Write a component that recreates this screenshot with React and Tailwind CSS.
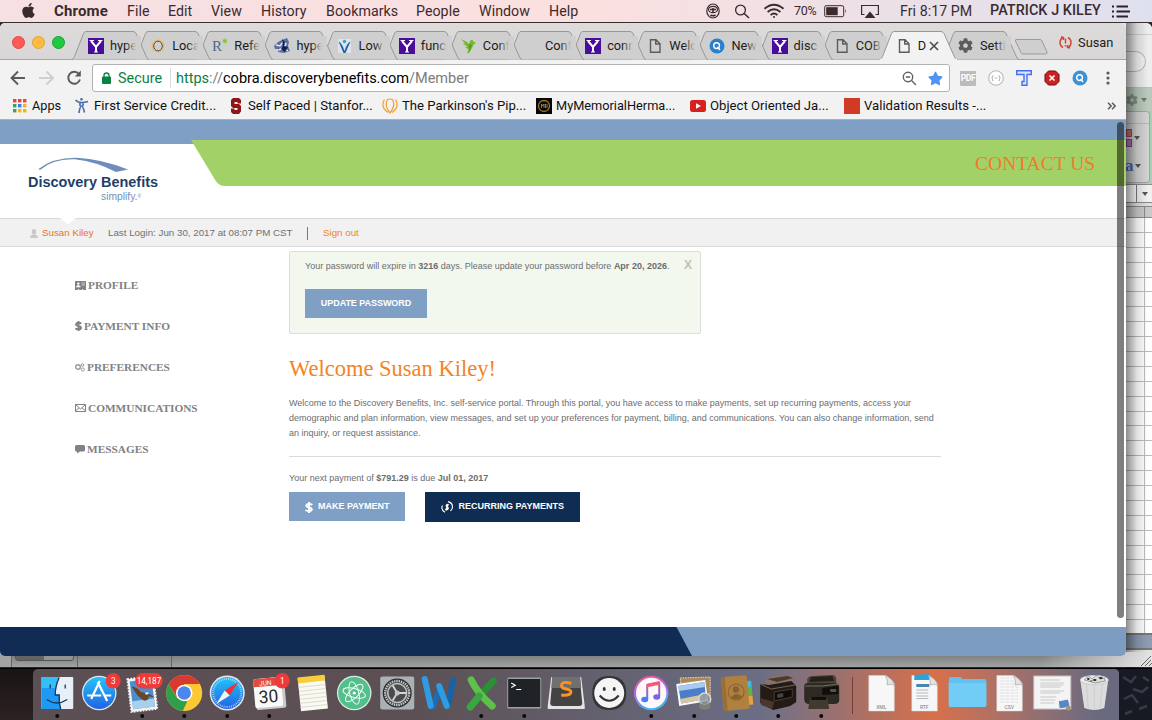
import React from "react";
import { FaApple, FaDollarSign, FaCog, FaLock, FaStar, FaCogs } from "react-icons/fa";

const MENUS = [
  ["File", "w-[41px]"],
  ["Edit", "w-[43px]"],
  ["View", "w-[50px]"],
  ["History", "w-[65px]"],
  ["Bookmarks", "w-[90px]"],
  ["People", "w-[63px]"],
  ["Window", "w-[70px]"],
  ["Help", "w-[40px]"],
];

function MenuBar() {
  return (
    <div className="relative flex h-[23px] w-full items-center border-b border-[#3a2f33] bg-linear-to-r from-[#f6e0e3] via-[#fbe0df] to-[#dfe0ee] text-[14.200px] leading-[22px] tracking-[0.050px] text-[#3a2a2e]">
      <div className="w-[54px] pl-[20px]">
        <FaApple size={17} className="-mt-[2px]" />
      </div>
      <div className="w-[73px] text-[15px] font-bold tracking-[0.15px]">Chrome</div>
      {MENUS.map(([t, w]) => (
        <div key={t} className={w + " font-[450] whitespace-nowrap"}>{t}</div>
      ))}
      <div className="ml-[115px] flex w-[447px] items-center">
        <svg className="w-[29px]" width="29" height="18" viewBox="0 0 29 18" fill="none" stroke="#3a2a2e">
          <ellipse cx="9" cy="9" rx="6.2" ry="7" strokeWidth="1.2" />
          <ellipse cx="9" cy="7.5" rx="4.5" ry="3.2" strokeWidth="1.2" />
          <path d="M9 6v4M6 7.500h6M6.500 13q2.500 1.500 5 0" strokeWidth="1.6" />
        </svg>
        <svg className="w-[29px]" width="29" height="18" viewBox="0 0 29 18" fill="none" stroke="#3a2a2e" strokeWidth="1.300">
          <circle cx="7.500" cy="8" r="4.900" />
          <path d="M11.200 11.500L16 16" strokeWidth="1.600" />
        </svg>
        <svg className="w-[32px]" width="32" height="18" viewBox="0 0 32 18" fill="none" stroke="#3a2a2e" strokeWidth="1.900">
          <path d="M2.500 6.800q9.500 -8 19 0M5.600 10q6.400 -5.400 12.800 0M8.600 13q3.400 -2.800 6.800 0" />
          <circle cx="12" cy="15" r="1" fill="#3a2a2e" stroke="none" />
        </svg>
        <span className="w-[28px] shrink-0 text-[12.500px] tracking-[-0.3px]">70%</span>
        <svg className="w-[38px]" width="38" height="18" viewBox="0 0 38 18">
          <rect x="2.700" y="3.700" width="19" height="11" rx="1.500" fill="none" stroke="#3a2a2e" />
          <rect x="4.200" y="5.200" width="11.500" height="8" fill="#3a2a2e" />
          <path d="M23.300 7v4.500q1.700 -2.200 0 -4.500" fill="#3a2a2e" />
        </svg>
        <svg className="w-[40px]" width="40" height="18" viewBox="0 0 40 18">
          <path d="M4.500 12.500H1.600V3.500H18.400V12.500H15.500" fill="none" stroke="#3a2a2e" strokeWidth="1.200" />
          <path d="M4.500 16L10 9.500L15.500 16Z" fill="#3a2a2e" />
        </svg>
        <span className="w-[90px] shrink-0 text-[14.200px] whitespace-nowrap">Fri 8:17 PM</span>
        <span className="w-[122px] shrink-0 text-[14.400px] font-medium whitespace-nowrap">PATRICK J KILEY</span>
        <svg className="shrink-0" width="20" height="18" viewBox="0 0 20 18" stroke="#2a2228" strokeWidth="2">
          <path d="M0 4.500h2M0 9.500h2M0 14.500h2M4.500 4.500H16M4.500 9.500H18M4.500 14.500H16" />
        </svg>
      </div>
    </div>
  );
}

function YIcon() {
  return (
    <svg width="16" height="16" viewBox="0 0 16 16">
      <rect width="16" height="16" fill="#4a0c9c" />
      <path d="M3 3l5 6 5-6M8 8.500V14" fill="none" stroke="#fff" strokeWidth="2" />
      <path d="M1.500 2.500h4.500M10 2.500h4.500M6 14h4" stroke="#fff" />
    </svg>
  );
}
function PageIcon() {
  return (
    <svg width="16" height="16" viewBox="0 0 16 16" fill="none" stroke="#5c5c5c" strokeWidth="1.400">
      <path d="M3.500 1.700H9L13 5.700V14.300H3.500ZM8.700 1.700V6H13" />
    </svg>
  );
}
function QIcon({ c = "#2a80cc" }) {
  return (
    <svg width="16" height="16" viewBox="0 0 16 16">
      <circle cx="8" cy="8" r="7.500" fill={c} />
      <circle cx="7.600" cy="7.600" r="2.900" fill="none" stroke="#fff" strokeWidth="1.400" />
      <path d="M8.500 9L11 12" stroke="#fff" strokeWidth="1.400" />
    </svg>
  );
}
const icons = {
  y: <YIcon />,
  o: (
    <svg width="16" height="16" viewBox="0 0 16 16">
      <circle cx="8" cy="8" r="5.800" fill="none" stroke="#f2b65a" strokeWidth="1.300" />
      <ellipse cx="8" cy="8" rx="4.300" ry="4.800" fill="none" stroke="#4e4b46" />
    </svg>
  ),
  r: (
    <svg className="overflow-visible" width="16" height="16" viewBox="0 0 16 16">
      <text x="0" y="13" fontFamily="Liberation Serif" fontSize="15" fill="#4c6a88">R</text>
      <path d="M12.800 0.500v5M10.600 1.700l4.400 2.600M15 1.700l-4.400 2.600" stroke="#86c232" strokeWidth="1.100" />
    </svg>
  ),
  knight: (
    <svg width="16" height="16" viewBox="0 0 16 16">
      <path d="M0 8L4 4L8 2L13 0L15 4L14 8L16 13L10 15L4 14L5 11L1 11Z" fill="#5c6da0" />
      <path d="M2 7l4 1 3-4 3 2-2 4 4 3M5 12l4-2" stroke="#dfe5f3" strokeWidth="1.500" fill="none" />
      <path d="M8 1l3 3-1 4 4 1-3 5-4-3 2-3z" fill="#15204a" />
    </svg>
  ),
  v: (
    <svg width="16" height="16" viewBox="0 0 16 16">
      <rect x="1" y="1" width="13" height="14" fill="#e0e4e8" />
      <circle cx="7.500" cy="3.500" r="1.700" fill="#29a8df" />
      <path d="M1.500 3.500Q5 4.500 7.500 13Q10 4.500 13.500 3.500Q11 9 8.500 15H6.500Q4 9 1.500 3.500Z" fill="#1d66ad" />
    </svg>
  ),
  bird: (
    <svg width="16" height="16" viewBox="0 0 16 16">
      <path d="M0 1L6 4L8 6L9 3L11 1.500L13 4L15 5L12.500 6.500L11 10L8 15L6 15.500L7.500 11L4 9.500L6.500 8.500L1.500 5.500L4 5.500Z" fill="#76b82a" />
      <path d="M8 6l3 1-3 7z" fill="#4f9a2c" />
    </svg>
  ),
  none: null,
  p: <PageIcon />,
  q: <QIcon />,
  g: <FaCog size={15} color="#5c5c5c" />,
};

const TABS = [
  ["y", "hype"], ["o", "Loca"], ["r", "Refe"], ["knight", "hype"], ["v", "Low"], ["y", "func"], ["bird", "Conf"],
  ["none", "Conf"], ["y", "conn"], ["p", "Welc"], ["q", "New"], ["y", "disc"], ["p", "COB"], ["p", "D", true], ["g", "Setti"],
];

function Tab({ icon, label, active, z }) {
  return (
    <div className="relative flex h-[29px] w-[62.15px] shrink-0 items-center" style={{ zIndex: z }}>
      <svg className="absolute top-0 left-[-13px]" width="80" height="29" viewBox="0 0 80 29">
        <path
          d="M0 28.500Q1.500 28 2.500 25.500L11.500 2.500Q12.300 0.500 14 0.500H61Q63 0.500 64 2.500L74.500 26Q75.500 28.500 77 28.500"
          fill={active ? "#f2f2f2" : "#cfcfcf"}
          stroke="#999797"
        />
        {active && <path d="M0 28.500H77" stroke="#f2f2f2" strokeWidth="1.500" />}
      </svg>
      <div className="relative ml-[3px] flex w-[16px] justify-center">{icons[icon]}</div>
      <div className="relative ml-[6px] w-[30px] text-[12.800px] whitespace-nowrap text-[#1b1b1b]">
        {label}
        {!active && <div className="absolute top-0 left-[15px] h-full w-[16px] bg-linear-to-r from-[#cfcfcf00] to-[#cfcfcf] to-70%" />}
      </div>
      {active && (
        <svg className="absolute top-[10px] left-[36.500px]" width="10" height="10" viewBox="0 0 10 10" stroke="#4f4f4f" strokeWidth="1.700">
          <path d="M1 1L9 9M9 1L1 9" />
        </svg>
      )}
    </div>
  );
}

function TabStrip() {
  return (
    <div className="flex h-[37px] items-end border-b border-[#a5a3a3] bg-linear-to-b from-[#dedbdb] to-[#d8d6d6]">
      <div className="mb-[10px] ml-[11.500px] flex w-[73.500px] gap-[7px] self-end">
        <div className="size-[13px] rounded-full border border-[#e2463f] bg-[#fc5b57]" />
        <div className="size-[13px] rounded-full border border-[#e1a233] bg-[#fdbc40]" />
        <div className="size-[13px] rounded-full border border-[#16a032] bg-[#22c840]" />
      </div>
      <div className="-mb-px flex">
        {TABS.map(([i, l, a], n) => (
          <Tab key={n} icon={i} label={l} active={a} z={a ? 40 : 30 - n} />
        ))}
      </div>
      <svg className="mb-[3px] ml-[-3px] shrink-0" width="36" height="18" viewBox="0 0 36 18">
        <path d="M2 1.500H26Q27.500 1.500 28 3L33 14Q33.500 16 31.500 16H9Q7.500 16 7 14.500L1.500 3Q1 1.500 2 1.500Z" fill="#cfcfcf" stroke="#9b9999" />
      </svg>
      <div className="mb-[7px] ml-[9px] flex items-center gap-[6px] text-[12.800px] whitespace-nowrap text-[#1b1b1b]">
        <svg width="13" height="13" viewBox="0 0 13 13" fill="none" stroke="#d64937" strokeWidth="1.500">
          <path d="M4 1.500Q1 3 1 6.500T4 11.500M9 1.500Q12 3 12 6.500T9 11.500M2 0.800L4.500 1.500V4M11 12L8.500 11.500V9" />
          <path d="M6.500 2.500V7.500M6.500 9V10.500" />
        </svg>
        Susan
      </div>
    </div>
  );
}

function Toolbar() {
  return (
    <div className="flex h-[35px] items-center pt-px">
      <svg className="ml-[10px]" width="82" height="18" viewBox="0 0 82 18" fill="none" strokeWidth="1.900">
        <path d="M15 9H2M8 2.500L1.600 9L8 15.500" stroke="#5a5a5a" />
        <path d="M29 9H42M36.500 2.500L43 9L36.500 15.500" stroke="#cfcfcf" />
        <path d="M69 5A6 6 0 1 0 70 10.500" stroke="#5a5a5a" />
        <path d="M70.800 1.500V7.500H64.800Z" fill="#5a5a5a" />
      </svg>
      <div className="flex h-[28px] w-[858px] items-center rounded-[3px] border border-[#b4b3b3] bg-white text-[14.500px] whitespace-nowrap">
        <svg className="ml-[8px]" width="11" height="12" viewBox="0 0 11 12">
          <rect x="1" y="4.500" width="9" height="7.500" rx="1" fill="#0b8043" />
          <path d="M3 5V3.300Q3 1 5.500 1T8 3.300V5" fill="none" stroke="#0b8043" strokeWidth="1.300" />
        </svg>
        <span className="mt-px ml-[6px] w-[52px] text-[14.400px] text-[#0b8043]">Secure</span>
        <span className="h-[20px] w-px bg-[#dcdcdc]" />
        <span className="mt-px ml-[5px] text-[#7c7c7c]">
          <span className="text-[#0b8043]">https</span>://<span className="text-black">cobra.discoverybenefits.com</span>/Member
        </span>
        <svg className="ml-auto" width="15" height="15" viewBox="0 0 15 15" fill="none" stroke="#606060" strokeWidth="1.400">
          <circle cx="6" cy="6" r="4.700" />
          <path d="M9.500 9.500L14 14M3.800 6h4.400" />
        </svg>
        <FaStar size={15} color="#4f93f3" className="mr-[6px] ml-[11px]" />
      </div>
      <div className="ml-[10px] flex h-[15px] w-[16px] items-center justify-center rounded-[1px] bg-[#bcbcbc] text-[8.500px] font-bold tracking-[-0.4px] text-white">PDF</div>
      <svg className="ml-[12px]" width="16" height="16" viewBox="0 0 16 16" fill="none" stroke="#b9b9b9" strokeWidth="1.100">
        <circle cx="8" cy="8" r="7.300" fill="#fff" />
        <path d="M5.500 5.500Q4.500 5.500 4.500 6.500T3.500 8Q4.500 8 4.500 9.500T5.500 10.500M10.500 5.500Q11.500 5.500 11.500 6.500T12.500 8Q11.500 8 11.500 9.500T10.500 10.500M6.500 8H9.500" />
      </svg>
      <svg className="ml-[12px]" width="16" height="16" viewBox="0 0 16 16" fill="none" stroke="#4a6fee" strokeWidth="1.400">
        <path d="M0.700 0.700H15.300V4.500H11V15.300H6V11.500H8V4.500H0.700Z" fill="#d9e2ff" />
      </svg>
      <svg className="ml-[12px]" width="16" height="16" viewBox="0 0 16 16">
        <path d="M4.500 1H11.500L15 4.500V11.500L11.500 15H4.500L1 11.500V4.500Z" fill="#cf1f1f" stroke="#641212" />
        <path d="M5.500 5.500L10.500 10.500M10.500 5.500L5.500 10.500" stroke="#fff" strokeWidth="1.600" />
      </svg>
      <div className="ml-[12px]"><QIcon c="#3c92d6" /></div>
      <svg className="ml-[18px]" width="4" height="16" viewBox="0 0 4 16" fill="#5a5a5a">
        <circle cx="2" cy="3" r="1.600" /><circle cx="2" cy="8" r="1.600" /><circle cx="2" cy="13" r="1.600" />
      </svg>
    </div>
  );
}

function Bookmark({ icon, children, className }) {
  return (
    <div className={"flex shrink-0 items-center whitespace-nowrap " + className}>
      <div className="mr-[4.500px] flex w-[16px] shrink-0 justify-center">{icon}</div>
      {children}
    </div>
  );
}

const APP_COLORS = ["#e8453c", "#e8453c", "#e8453c", "#34a853", "#3b7ded", "#f2b31c", "#34a853", "#f2b31c", "#f2b31c"];

function Bookmarks() {
  return (
    <div className="flex h-[25px] items-center border-b border-[#b2b1b1] pb-[2px] pl-[11.500px] text-[13.150px] text-[#111]">
      <Bookmark
        className="w-[62px] text-[12.700px]"
        icon={
          <svg width="14" height="14" viewBox="0 0 14 14">
            {APP_COLORS.map((c, i) => <rect key={i} x={(i % 3) * 5} y={Math.floor(i / 3) * 5} width="3.400" height="3.400" fill={c} />)}
          </svg>
        }
      >Apps</Bookmark>
      <Bookmark
        className="w-[154px] tracking-[0.08px]"
        icon={
          <svg width="14" height="17" viewBox="0 0 14 17" fill="none" stroke="#4a6eb0" strokeWidth="1.700">
            <circle cx="6.500" cy="2.200" r="1.300" fill="#4a6eb0" stroke="none" />
            <path d="M0.500 3Q3 5.500 6.500 5.500T13 4.500M5 5V9M8 5V9M4 16Q5 9 6.500 9T9.500 15.500" />
          </svg>
        }
      >First Service Credit...</Bookmark>
      <Bookmark
        className="w-[154px]"
        icon={
          <svg width="12" height="16" viewBox="0 0 12 16">
            <path d="M3 0H9L11 2V5.500H7.500V4H4.500V6H9L11 8V13.500L9 16H3L1 14V10.500H4.500V12H7.500V10H3L1 8V2Z" fill="#8f1518" />
          </svg>
        }
      >Self Paced | Stanfor...</Bookmark>
      <Bookmark
        className="w-[154px]"
        icon={
          <svg width="16" height="16" viewBox="0 0 16 16" fill="none" stroke="#f0a030" strokeWidth="1.200">
            <path d="M8 15Q2 8 5.500 1.500Q8 0.500 10.500 1.500Q14 8 8 15ZM6 14.500Q-2 9 2.500 1.500M10 14.500Q18 9 13.500 1.500" />
          </svg>
        }
      >The Parkinson's Pip...</Bookmark>
      <Bookmark
        className="w-[154px] text-[12.750px]"
        icon={
          <svg width="16" height="16" viewBox="0 0 16 16">
            <rect width="16" height="16" fill="#050505" />
            <circle cx="8" cy="8" r="5.500" fill="none" stroke="#a37722" strokeWidth="1.300" />
            <path d="M5.500 10V6L7 8L8 6V10M9.500 6v4M11 6v4" stroke="#8a7a58" fill="none" />
          </svg>
        }
      >MyMemorialHerma...</Bookmark>
      <Bookmark
        className="w-[154px]"
        icon={
          <svg width="16" height="12" viewBox="0 0 16 12">
            <rect width="16" height="12" rx="2.500" fill="#d8201f" />
            <path d="M6 3.200V8.800L11 6Z" fill="#fff" />
          </svg>
        }
      >Object Oriented Ja...</Bookmark>
      <Bookmark className="w-[154px]" icon={<div className="size-[16px] bg-[#d23b23]" />}>Validation Results -...</Bookmark>
      <svg className="ml-[109px]" width="10" height="8" viewBox="0 0 10 8" fill="none" stroke="#5a5a5a" strokeWidth="1.500">
        <path d="M1 0.800L4.200 4L1 7.200M5 0.800L8.200 4L5 7.200" />
      </svg>
    </div>
  );
}

const NAV = [
  ["PROFILE", (
    <svg width="11" height="9" viewBox="0 0 11 9">
      <path d="M0 0H11V9H8.500L7.500 8L6.500 9H4.500L3.500 8L2.500 9H0Z" fill="#808285" />
      <circle cx="3.300" cy="2.600" r="1.200" fill="#fff" /><path d="M1.200 6Q3.300 2.500 5.400 6ZM6.500 2H10M6.500 4H10" fill="#fff" stroke="#fff" strokeWidth="0.600" />
    </svg>
  )],
  ["PAYMENT INFO", <svg width="7" height="10" viewBox="0 0 7 10" fill="none" stroke="#808285" strokeWidth="1.900"><path d="M6.300 2.800Q5.500 1.700 3.500 1.700T1 3.200Q1 4.500 3.500 5T6 7Q6 8.400 3.500 8.400T0.500 7.200M3.500 0V10" /></svg>],
  ["PREFERENCES", (
    <svg width="10" height="9" viewBox="0 0 10 9" fill="none" stroke="#97999c"><circle cx="3" cy="4" r="2.300" strokeWidth="1.400" /><circle cx="7.500" cy="2" r="1.300" /><circle cx="7.800" cy="6.500" r="1.600" /></svg>
  )],
  ["COMMUNICATIONS", (
    <svg width="11" height="8" viewBox="0 0 11 8" fill="none" stroke="#808285">
      <path d="M0.500 0.500H10.500V7.500H0.500ZM0.500 0.500L5.500 5L10.500 0.500M0.500 7L4 3.800M10.500 7L7 3.800" />
    </svg>
  )],
  ["MESSAGES", (
    <svg width="10" height="9" viewBox="0 0 10 9"><path d="M1.500 0H8.500Q10 0 10 1.500V5Q10 6.500 8.500 6.500H5L2 8.500V6.500H1.500Q0 6.500 0 5V1.500Q0 0 1.500 0Z" fill="#808285" /></svg>
  )],
];

function SiteHeader() {
  return (
    <header className="relative h-[98px] bg-white">
      <div className="h-[24px] bg-[#7f9fc5]" />
      <svg className="absolute top-[20px] left-0" width="1126" height="46" viewBox="0 0 1126 46">
        <path d="M191 0H1126V46H225Q219 46 215.500 40.500Z" fill="#a2d167" />
      </svg>
      <div className="absolute top-[37px] left-[28px] w-[132px] font-['Liberation_Sans',Arial,sans-serif]">
        <svg width="105" height="15" viewBox="0 0 105 15" className="ml-[9px]">
          <path d="M1.500 12Q16 0.500 40 0.800Q64 2 91 12.500L79 15Q60 5 38 2.300Q16 1.500 3 13Z" fill="#6e8cbc" />
        </svg>
        <div className="text-[14.450px] leading-[20px] font-bold whitespace-nowrap text-[#1e3f68]">Discovery Benefits</div>
        <div className="-mt-[2px] ml-[73px] text-[10.300px] leading-[14px] whitespace-nowrap text-[#7390bd]">simplify.<sup className="text-[5px]">®</sup></div>
      </div>
      <div className="absolute top-[32px] left-[975px] font-['Liberation_Serif',serif] text-[19.550px] leading-[24px] whitespace-nowrap text-[#f5792a]">CONTACT US</div>
    </header>
  );
}

function UserBar() {
  return (
    <div className="relative flex h-[29px] items-center border-t border-b border-t-[#d9d9d9] border-b-[#d9d9d9] bg-[#f1f1f1] pt-[2px] font-['Liberation_Sans',Arial,sans-serif] text-[9.770px] whitespace-nowrap text-[#6f7073]">
      <svg className="absolute -top-px left-[60px]" width="16" height="7" viewBox="0 0 16 7"><path d="M0 0H16L8 6.500Z" fill="#fff" /></svg>
      <svg className="ml-[30px]" width="8" height="9" viewBox="0 0 8 9" fill="#c9c9c9"><ellipse cx="4" cy="2.800" rx="2.200" ry="2.700" /><path d="M0.300 9V7L3 5.500H5L7.700 7V9Z" /></svg>
      <span className="ml-[4px] w-[66px] text-[#f36f21]">Susan Kiley</span>
      <span className="w-[199px]">Last Login: Jun 30, 2017 at 08:07 PM CST</span>
      <span className="h-[13px] w-px bg-[#77787b]" />
      <span className="ml-[15px] text-[#f58220]">Sign out</span>
    </div>
  );
}

function SiteBody() {
  return (
    <div className="flex h-[380px] bg-white font-['Liberation_Sans',Arial,sans-serif] text-[9px] text-[#6c6d70]">
      <nav className="w-[289px] pt-[17.500px] pl-[75px] font-['Liberation_Serif',serif] text-[11.300px] font-bold text-[#808285]">
        {NAV.map(([t, icon]) => (
          <div key={t} className="flex h-[41px] items-center gap-[2px] whitespace-nowrap">{icon}<span>{t}</span></div>
        ))}
      </nav>
      <main className="w-[652px] pt-[4px]">
        <div className="relative h-[83px] w-[412px] rounded-[2px] border border-[#dbdfd8] bg-[#f3f8ee] pt-[7px] pl-[15px]">
          <div className="leading-[14px] whitespace-nowrap">
            Your password will expire in <b>3216</b> days. Please update your password before <b>Apr 20, 2026</b>.
          </div>
          <div className="absolute top-[4px] right-[8px] text-[12px] leading-[18px] font-bold text-[#bcc3bb]">X</div>
          <button className="mt-[16px] block h-[29px] w-[122px] bg-[#7f9fc5] text-center font-bold tracking-[-0.05px] whitespace-nowrap text-white">UPDATE PASSWORD</button>
        </div>
        <h1 className="mt-[21px] font-['Liberation_Serif',serif] text-[22.500px] leading-[28px] text-[#f28423]">Welcome Susan Kiley!</h1>
        <p className="mt-[13px] leading-[15px] whitespace-nowrap">
          Welcome to the Discovery Benefits, Inc. self-service portal. Through this portal, you have access to make payments, set up recurring payments, access your
          <br />
          demographic and plan information, view messages, and set up your preferences for payment, billing, and communications. You can also change information, send
          <br />
          an inquiry, or request assistance.
        </p>
        <div className="mt-[15px] h-px bg-[#dbdbdb]" />
        <p className="mt-[14px] leading-[15px]">
          Your next payment of <b>$791.29</b> is due <b>Jul 01, 2017</b>
        </p>
        <div className="mt-[6px] flex items-start gap-[20px] font-bold whitespace-nowrap text-white">
          <button className="flex h-[29px] w-[116px] items-center bg-[#7f9fc5] pt-px pl-[16px]">
            <svg width="8" height="11" viewBox="0 0 8 11" fill="none" stroke="#fff" strokeWidth="2" className="mr-[5px]"><path d="M7.200 3Q6.300 2 4 2T1.300 3.600Q1.300 5 4 5.500T6.800 7.600Q6.800 9 4 9T0.600 8M4 0V11" /></svg>
            MAKE PAYMENT
          </button>
          <button className="flex h-[30px] w-[155px] items-center bg-[#0f2c53] pl-[16px]">
            <svg width="12" height="12" viewBox="0 0 12 12" className="mr-[5.500px]" fill="none" stroke="#fff">
              <path d="M1.500 4.500Q-0.500 8.500 4 11.300M7 0.600Q12.500 2 11.200 7.500L9.500 10" strokeWidth="1.100" />
              <path d="M7.800 4.200Q6.800 3.400 5.800 3.900Q4.600 4.700 6 5.900Q7.600 6.700 6.800 8Q5.800 8.900 4.300 8M6.600 2.900L5.300 9.700" strokeWidth="1.500" />
            </svg>
            RECURRING PAYMENTS
          </button>
        </div>
      </main>
    </div>
  );
}

function ChromeWindow() {
  return (
    <div className="absolute top-[23px] left-0 h-[633px] w-[1126px] overflow-hidden rounded-[5px] bg-[#f2f2f2]">
      <TabStrip />
      <Toolbar />
      <Bookmarks />
      <div className="relative">
        <SiteHeader />
        <UserBar />
        <SiteBody />
        <svg className="block" width="1126" height="29" viewBox="0 0 1126 29">
          <path d="M0 0H1126V29H0Z" fill="#7c9cc2" />
          <path d="M0 0H676.500L692 29H0Z" fill="#102c54" />
        </svg>
        <div className="absolute top-[2px] right-[2px] h-[496px] w-[7px] rounded-full bg-black/50" />
      </div>
    </div>
  );
}

function Arrow({ className = "" }) {
  return <svg className={className} width="6" height="4" viewBox="0 0 6 4"><path d="M0 0H6L3 4Z" fill="#555" /></svg>;
}

const GRID_ROWS = Array.from({ length: 28 });

function SpreadsheetWindow() {
  return (
    <>
      <div className="absolute top-[23px] left-[1120px] flex h-[633px] w-[32px] flex-col overflow-hidden rounded-tr-[6px] bg-[#eaeaea] pl-[6px]">
        <div className="h-[12px] border-b border-[#cfcfcf] bg-[#ededed]" />
        <div className="flex h-[53px] items-center border-b border-[#bdbdbd] bg-[#ededed]">
          <div className="h-[21px] w-[20px] rounded-r-full border border-l-0 border-[#bababa] bg-[#f1f1f1]" />
        </div>
        <div className="flex h-[23px] items-center gap-[3px] bg-[#b9c9bc]">
          <FaCog size={12} color="#85918a" /><Arrow className="opacity-70" />
        </div>
        <div className="h-[73px] bg-[#a8d0b3]">
          <div className="h-[72px] w-[24px] rounded-r-[4px] border border-l-0 border-[#a4a4a4] bg-[#d2d2d2]">
            <div className="h-[12px] border-b border-[#b9b9b9]" />
            <div className="mt-[5px] flex items-center gap-[2px]">
              <div className="flex flex-col gap-[2px]">
                <div className="h-[8px] w-[6px] border border-[#a14c4c] bg-[#cf6f72]" />
                <div className="h-[8px] w-[6px] border border-[#84449a] bg-[#b572c8]" />
              </div>
              <Arrow />
            </div>
            <div className="mt-[9px] -ml-px flex items-center gap-px font-['Liberation_Serif',serif] text-[17px] leading-[20px] font-bold text-[#4a66b8]">a<Arrow /></div>
          </div>
        </div>
        <div className="flex h-[19px] border-t border-b border-[#8a8a8a] bg-white">
          <div className="w-[11px] border-r border-[#777]" />
          <div className="flex flex-1 items-center justify-center bg-[#f0f0f0]"><Arrow /></div>
        </div>
        <div className="h-[3px] bg-[#ddd]" />
        <div className="flex h-[12px] border-t border-b border-[#8a8a8a] bg-[#c9c9c9]"><div className="w-[19px] border-r border-[#8a8a8a]" /></div>
        <div className="h-[415px] shrink-0 overflow-hidden bg-white">
          {GRID_ROWS.map((_, i) => (
            <div key={i} className="flex h-[14.900px] border-b border-[#bcbcbc]"><div className="w-[19px] border-r border-[#bcbcbc]" /></div>
          ))}
        </div>
        <div className="h-[17px] shrink-0 border-t-2 border-b-2 border-[#777] bg-[#8c9cb2]" />
        <div className="flex-1 bg-[#e2e2e2]" />
      </div>
      <div className="absolute top-[23px] left-[1126px] h-[645px] w-[22px] bg-linear-to-r from-black/45 via-black/12 to-transparent" />
      <div className="absolute top-[652px] left-0 flex h-[15px] w-full justify-end bg-linear-to-b from-[#757575] to-[#a1a3a2]">
        <div className="absolute top-0 left-0 h-full w-[12px] border-r border-[#666] bg-[#a2a2a2]" />
        <div className="absolute top-0 left-[15px] h-[9px] w-[59px] rounded-b-[3px] border border-[#555] bg-linear-to-r from-[#636363] from-50% to-[#929292] to-50%" />
        <div className="absolute top-0 left-[77px] h-full w-[95px] border-r border-l border-[#666]" />
        <div className="h-full w-[110px] bg-linear-to-r from-transparent to-[#e4e4e4]" />
        <svg className="absolute right-0 bottom-0" width="12" height="12" viewBox="0 0 12 12" stroke="#666"><path d="M1 11L11 1M5 11L11 5M9 11L12 8" /></svg>
      </div>
    </>
  );
}

const doc = (label, extra) => (
  <>
    <path d="M8.500 7.500H26L34 16V43H8.500Z" fill="#f7f7f7" stroke="#d9d9d9" strokeWidth="0.500" />
    {extra}
    <path d="M25 7.500Q28 12 27 17Q31 15 34.500 17.500Q33 11 25 7.500Z" fill="#e4e4e4" stroke="#a2a2a2" strokeWidth="0.700" />
    <text x="21" y="41" textAnchor="middle" fontSize="5" fill="#777">{label}</text>
  </>
);

const badge = (x, w, t) => (
  <>
    <rect x={x} y="5" width={w} height="15.500" rx="7.700" fill="#ef3a3a" />
    <text x={x + w / 2} y="15.600" textAnchor="middle" fontSize="8.200" fill="#fff">{t}</text>
  </>
);

const DOCK = {
  finder: [true, <>
    <rect x="5" y="9" width="32" height="32" rx="1" fill="#e8f0f7" />
    <path d="M5 9H23Q19 18 19 27H23Q22.500 35 24.500 41H5Z" fill="#1e9af4" />
    <path d="M5 9H23Q19.500 15 19 20H5Z" fill="#35bff8" />
    <path d="M14 16.500v4M29 16.500v4M10.500 31.500Q20.500 38.500 31 31.500M23 9.500Q19 18 19 27H23Q22.500 35 24.500 41" fill="none" stroke="#15385e" strokeWidth="1.300" />
  </>],
  store: [false, <>
    <circle cx="21" cy="25" r="17.300" fill="#d8e8f4" /><circle cx="21" cy="25" r="16" fill="url(#blue)" />
    <path d="M21.500 13L13 31M19.500 14L29 33M9 27.500H23M27 27.500H33" fill="none" stroke="#fff" strokeWidth="2.200" />
    {badge(27.500, 15, "3")}
  </>],
  mail: [true, <>
    <g transform="rotate(-7 21 25)">
      <rect x="8" y="9.500" width="26" height="33" fill="#f4f4f4" stroke="#f4f4f4" strokeDasharray="1.700 1.300" strokeWidth="2" />
      <rect x="10" y="12" width="22" height="28" fill="#4b8fd0" /><rect x="10" y="32" width="22" height="8" fill="#a9d0ea" />
      <path d="M11 17Q17 19 20 24Q27 25 33 31L27 29Q27 33 22 33L19 30L16 27Z" fill="#6c4528" /><path d="M24 26l3 0" stroke="#fff" strokeWidth="2" />
    </g>
    {badge(14, 27.500, "14,187")}
  </>],
  chrome: [true, <>
    <circle cx="21" cy="25" r="18" fill="#fcc934" />
    <path d="M5.400 16A18 18 0 0 1 36.600 16H21L13.500 29Z" fill="#d93a30" />
    <path d="M5.400 16L13.500 29.500L24 33.500L19.500 43A18 18 0 0 1 5.400 16Z" fill="#2f9f4b" />
    <circle cx="21" cy="25" r="8.300" fill="#fff" /><circle cx="21" cy="25" r="6.700" fill="#4a86ee" />
  </>],
  safari: [true, <>
    <circle cx="21" cy="25" r="17.500" fill="#e4e7ea" /><circle cx="21" cy="25" r="16" fill="url(#blue)" />
    <circle cx="21" cy="25" r="14" fill="none" stroke="#bfe3fb" strokeWidth="2" strokeDasharray=".7 1.200" />
    <path d="M32 14L23.500 27.500L18.500 22.500Z" fill="#ee3333" /><path d="M10 36L18.500 22.500L23.500 27.500Z" fill="#f3f3f3" />
  </>],
  calendar: [true, <>
    <g transform="rotate(-5 21 25)">
      <rect x="7" y="10" width="30" height="31" rx="2" fill="#c9c9c9" /><rect x="6" y="10" width="28" height="29" rx="2" fill="#fafafa" />
      <path d="M6 18V12Q6 10 8 10H32Q34 10 34 12V18Z" fill="#e2493f" />
      <text x="18" y="17" textAnchor="middle" fontSize="6.500" fill="#fff">JUN</text>
      <text x="20" y="34.500" textAnchor="middle" fontSize="17.500" fill="#282828">30</text>
    </g>
    {badge(26.500, 15, "1")}
  </>],
  notes: [false, <g transform="rotate(-6 21 25)">
    <rect x="8" y="9" width="27" height="33" fill="#fbfaf2" /><rect x="8" y="8" width="27" height="6" fill="#f6cd3b" />
    <path d="M8 18h27M8 22h27M8 26h27M8 30h27M8 34h27M8 38h27" stroke="#d6d4c8" strokeWidth="0.800" />
  </g>],
  atom: [false, <>
    <circle cx="21" cy="25" r="17.300" fill="#d9eee2" /><circle cx="21" cy="25" r="16" fill="#52bf8c" />
    <g fill="none" stroke="#eefaf3">
      <ellipse cx="21" cy="25" rx="11.500" ry="4.500" transform="rotate(15 21 25)" /><ellipse cx="21" cy="25" rx="11.500" ry="4.500" transform="rotate(75 21 25)" /><ellipse cx="21" cy="25" rx="11.500" ry="4.500" transform="rotate(-45 21 25)" />
    </g>
    <circle cx="21" cy="25" r="1.600" fill="#fff" />
  </>],
  prefs: [false, <>
    <rect x="4" y="8.500" width="34" height="33" rx="2" fill="#a9b1b7" />
    <circle cx="21" cy="25" r="14.500" fill="#2c2c2c" /><circle cx="21" cy="25" r="12" fill="#3a3a3a" stroke="#c3c6c8" strokeWidth="2.400" strokeDasharray="1.500 .8" />
    <circle cx="21" cy="25" r="9.500" fill="#4a4c4e" stroke="#bfc2c4" strokeWidth="1.600" />
    <path d="M21 25H30M21 25L16.500 17.500M21 25L16.500 32.500" stroke="#d3d5d7" strokeWidth="1.800" /><circle cx="21" cy="25" r="2.500" fill="#c3c6c8" />
  </>],
  word: [false, <g fill="none" strokeLinecap="round" strokeLinejoin="round" strokeWidth="6">
    <path d="M35 12L30 37" stroke="#1a62a6" /><path d="M15 38L22 19" stroke="#1c6bb3" />
    <path d="M6.500 11L12.500 38" stroke="#2f9be0" /><path d="M21 18L28.500 38" stroke="#2f9be0" />
  </g>],
  excel: [true, <g fill="none" strokeLinecap="round" strokeWidth="7">
    <path d="M10 39L33 13" stroke="#2d8f37" /><path d="M11 12Q17 25 32 38" stroke="#5cc24a" /><path d="M10 39L19 28" stroke="#3ba63f" />
  </g>],
  terminal: [true, <>
    <rect x="4" y="9.500" width="34" height="31" rx="1.500" fill="#9aa0a3" /><rect x="5" y="11" width="32" height="28" fill="#202325" />
    <path d="M8 15L12 17.300L8 19.500M13 21.500H18" fill="none" stroke="#fff" strokeWidth="1.200" />
  </>],
  sublime: [false, <>
    <path d="M6 9H36L39.500 38V41H2.500V38Z" fill="#e3e3e3" /><path d="M7.500 9H34.500L37 35Q37 38 34 38H8Q5 38 5 35Z" fill="#434343" />
    <path d="M7 9H35L36 20H6Z" fill="#707070" />
    <path d="M26 15.500Q18 13 16.500 16.500T21 21T25.500 25T16 27" fill="none" stroke="#fb9424" strokeWidth="2.900" />
  </>],
  smile: [false, <>
    <path d="M21 8Q38 8 38 25T21 42T4 25T21 8L24 6" fill="#333638" /><circle cx="21" cy="25" r="15" fill="#f5f5f5" />
    <ellipse cx="16" cy="21" rx="1.500" ry="2" fill="#333" /><ellipse cx="26" cy="21" rx="1.500" ry="2" fill="#333" />
    <path d="M11.500 27.500Q21 38 30.500 27.500" fill="none" stroke="#333" strokeWidth="2.200" />
  </>],
  music: [true, <>
    <circle cx="21" cy="25" r="17.300" fill="url(#itunes)" /><circle cx="21" cy="25" r="15.200" fill="#fbf7fb" />
    <path d="M17 31V17L29 14.500V28" fill="none" stroke="url(#note)" strokeWidth="2" /><path d="M17 17.500L29 15" stroke="#f35a7a" strokeWidth="3.500" />
    <ellipse cx="14.500" cy="31.500" rx="3.500" ry="2.800" fill="#4b7df0" /><ellipse cx="26.500" cy="29" rx="3.500" ry="2.800" fill="#7d62e8" />
  </>],
  preview: [true, <>
    <path d="M7 10L37 9V33H9Z" fill="#ab8a58" stroke="#e9dfc8" strokeDasharray="1.500 1" />
    <path d="M3 16L32 12L35 33L6 38Z" fill="#fafafa" /><path d="M5 18L31 14L33 31L8 35.500Z" fill="#4b7dc8" /><path d="M5 18L31 14L31.500 19L6 23Z" fill="#a9cbef" /><path d="M7 31L32 26L33 31L8 35.500Z" fill="#d8c5a0" />
    <circle cx="31.500" cy="31" r="6" fill="#8795a0" fillOpacity="0.800" stroke="#d8d8d8" strokeWidth="1.500" /><path d="M26 34Q31 39 37 34V40Q31 43 26 40Z" fill="#807e79" />
  </>],
  contacts: [true, <g transform="rotate(-5 21 25)">
    <path d="M32 14H37V21H32Z" fill="#48b7d8" /><path d="M32 21H37V29H32Z" fill="#62b04b" /><path d="M32 29H37V38H32Z" fill="#e9a23b" />
    <rect x="7" y="8" width="26" height="34" rx="2" fill="#b0803f" /><path d="M7 8H11V42H7Z" fill="#9a6f36" />
    <circle cx="21" cy="24" r="8" fill="none" stroke="#8a622e" /><circle cx="21" cy="21.500" r="3.300" fill="#8a622e" /><path d="M15 29.500Q21 22.500 27 29.500Q21 33 15 29.500" fill="#8a622e" />
  </g>],
  printerA: [true, <>
    <path d="M8 13L15 8L35 7L38 10L22 15L10 17Z" fill="#8a7263" />
    <path d="M10 11L30 8L36 10L20 14Z" fill="#4b3a30" />
    <path d="M3 16L12 17L34 13L39 18V34L33 38L16 42L3 35Z" fill="#241b16" />
    <path d="M3 16L14 21L38 17" stroke="#76614f" fill="none" />
    <path d="M17 24L35 21V29L17 33Z" fill="#0e0b0a" stroke="#55483e" strokeWidth="0.800" />
    <path d="M20 26L26 25V29L20 30Z" fill="#4a4440" />
    <path d="M3 30L17 34L15 41L4 37Z" fill="#4a382c" />
  </>],
  printerB: [true, <>
    <path d="M7 11Q8 8 12 8L32 7Q35 7 36 10V17H7Z" fill="#4a4439" />
    <path d="M11 9L32 8L34 13L9 14Z" fill="#24201c" />
    <path d="M4 18Q4 15 8 15H34Q39 15 39 19V32Q39 36 34 36H9Q4 36 4 31Z" fill="#2d2a23" />
    <path d="M5 18H22L39 16" stroke="#76705f" fill="none" />
    <path d="M22 20L38 18V26L22 27Z" fill="#100e0c" /><path d="M30 21H36V24H30Z" fill="#55524c" />
    <path d="M10 29H27L29 41H8Z" fill="#403b31" /><path d="M11 29H26V32H11Z" fill="#12100e" />
  </>],
};

const STACKS = [
  doc("XML", null),
  doc("RTF", <><path d="M11 7L26 6V12H11Z" fill="#2ba3dd" /><rect x="13" y="16" width="13" height="3" fill="#4c86ae" /><path d="M13 22h12M13 25h12M13 28h12M13 30.500h12" stroke="#b3b8bd" /></>),
  <>
    <path d="M2.500 12V37.500Q2.500 39 4 39H38.500Q40 39 40 37.500V12.500Q40 11 38.500 11H16L14.500 9H4Q2.500 9 2.500 12Z" fill="#62c1ee" />
    <path d="M2.500 15H40V37Q40 39 38 39H4Q2.500 39 2.500 37Z" fill="#72cdf6" />
  </>,
  doc("CSV", <path d="M12 10h12M12 13h13M12 16h14M12 19h18M12 22h18M12 25h18M12 28h18M12 31h18M12 34h18" stroke="#dedede" strokeDasharray="4 1" />),
  <>
    <rect x="2.500" y="8" width="37" height="33" fill="#f4f4f4" stroke="#c5c0bf" />
    <path d="M9 12h20M9 15h24M9 17h23M9 19h20M9 23h24M9 25h20M9 29h16M9 32h15M9 35h14" stroke="#b4b4b4" strokeWidth="0.700" />
    <path d="M27 33L37 31L39 39L28 41Z" fill="#5486c9" stroke="#eee" /><circle cx="37" cy="40" r="2.500" fill="#a59579" />
  </>,
  <>
    <path d="M7 12L11 40Q21 44 31 40L35 12Z" fill="#dcdcdc" /><path d="M13 16l2 24M21 18v23M29 16l-2 24" stroke="#cdcdcd" />
    <ellipse cx="21" cy="12" rx="14" ry="4.500" fill="#efefef" stroke="#c9c9c9" />
    <path d="M11 12l4-4 4 3 4-4 4 4 4-1 1 3-10 2z" fill="#dedede" stroke="#777" strokeWidth="0.700" /><path d="M14 11h2M20 12h3M26 10h3" stroke="#333" strokeWidth="1.800" /><path d="M17 13h2" stroke="#2e8b57" strokeWidth="1.500" />
  </>,
];

function Dock() {
  return (
    <div className="absolute top-[668px] left-0 flex h-[52px] w-full border-t border-black bg-[#17191f]">
      <div className="h-full w-[33px] bg-linear-to-b from-[#191415] to-[#2d2122]" />
      <div className="flex h-full w-[1086px] rounded-t-[5px] bg-linear-to-r from-[#5b4f53] from-0% via-[#5c5054] via-35% to-[#6c718a] to-70%">
        <div className="flex h-full w-full rounded-t-[5px] bg-linear-to-r from-[#6c718a00] from-67% via-[#d8704a] via-83% to-[#696a80] to-98%">
          <div className="-mt-px ml-[3px] flex">
            {Object.entries(DOCK).map(([k, [running, art]]) => (
              <svg key={k} className="w-[42.450px] shrink-0 overflow-visible" height="52" viewBox="0 0 42 52">
                {art}
                {running && <circle cx="21" cy="48" r="2" fill="#0c0a0b" />}
              </svg>
            ))}
          </div>
          <div className="mt-[8px] ml-[10px] h-[37px] w-px bg-[#7a3c2c]" />
          <div className="-mt-px ml-[7px] flex">
            {STACKS.map((art, i) => (
              <svg key={i} className="w-[42.600px] shrink-0" height="52" viewBox="0 0 42 52">{art}</svg>
            ))}
          </div>
        </div>
      </div>
      <svg className="flex-1" height="51" viewBox="0 0 33 51"><rect width="33" height="51" fill="#171a23" /><path d="M4 8l8 5 5-6M14 20l9 3 6-5M5 30l8-4 6 8M20 40l8-3M6 45l7-3M24 8l6 4" stroke="#343b4a" strokeWidth="2.500" fill="none" /></svg>
      <svg width="0" height="0" className="absolute">
        <defs>
          <linearGradient id="blue" x2="0" y2="1"><stop stopColor="#24c3f8" /><stop offset="1" stopColor="#2262e2" /></linearGradient>
          <linearGradient id="itunes" x2="0.300" y2="1"><stop stopColor="#f5557a" /><stop offset="0.500" stopColor="#b765ea" /><stop offset="1" stopColor="#3db7f5" /></linearGradient>
          <linearGradient id="note" x2="0" y2="1"><stop stopColor="#f8556d" /><stop offset="1" stopColor="#4b7df0" /></linearGradient>
        </defs>
      </svg>
    </div>
  );
}

export default function App() {
  return (
    <div className="relative h-[720px] w-[1152px] overflow-hidden bg-[#2b2530] font-['Roboto',sans-serif]">
      <MenuBar />
      <SpreadsheetWindow />
      <ChromeWindow />
      <Dock />
    </div>
  );
}
